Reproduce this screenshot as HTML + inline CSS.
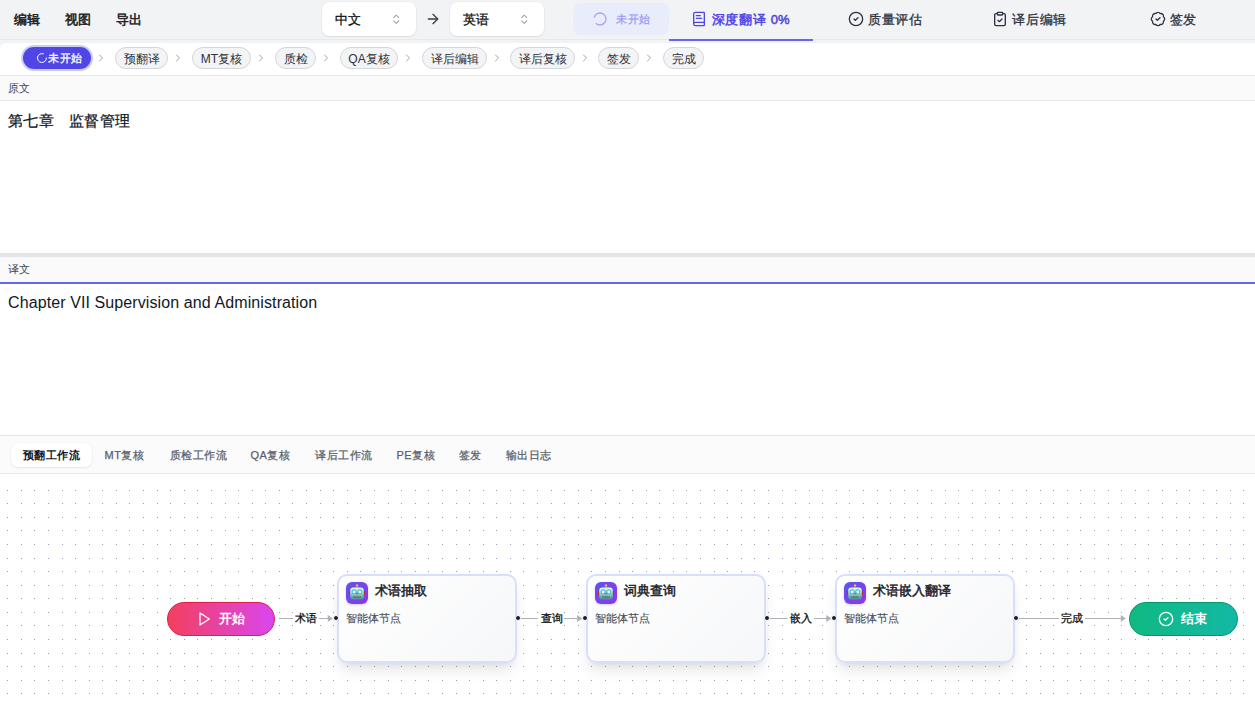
<!DOCTYPE html>
<html><head><meta charset="utf-8">
<style>
*{box-sizing:border-box;margin:0;padding:0}
html,body{width:1255px;height:706px;overflow:hidden;background:#fff;font-family:"Liberation Sans",sans-serif;color:#111827}
.abs{position:absolute}
.t{position:absolute;white-space:nowrap;line-height:1}
</style></head><body>
<div class="abs" style="left:0px;top:0px;width:1255px;height:50px;background:#f2f3f5"></div>
<div class="abs" style="left:0px;top:39px;width:1255px;height:1px;background:#e7e8eb"></div>
<div class="t" style="left:13.5px;top:12.5px;font-size:13px;color:#1f2328;-webkit-text-stroke-width:0.55px">编辑</div>
<div class="t" style="left:64.5px;top:12.5px;font-size:13px;color:#1f2328;-webkit-text-stroke-width:0.55px">视图</div>
<div class="t" style="left:115.5px;top:12.5px;font-size:13px;color:#1f2328;-webkit-text-stroke-width:0.55px">导出</div>
<div class="abs" style="left:322px;top:2px;width:94px;height:34px;background:#fff;border-radius:7px;box-shadow:0 0 0 0.5px rgba(0,0,0,0.05),0 1px 2px rgba(0,0,0,0.07)"></div>
<div class="t" style="left:334.5px;top:12.5px;font-size:13px;color:#111111;letter-spacing:0.5px;-webkit-text-stroke-width:0.3px">中文</div>
<svg class="abs" style="left:389.75px;top:12.5px;" width="12.5" height="12.5" fill="none" stroke-width="2" stroke-linecap="round" stroke-linejoin="round" viewBox="0 0 24 24" stroke="#9ca3af"><path d="m7 15 5 5 5-5"/><path d="m7 9 5-5 5 5"/></svg>
<div class="abs" style="left:450px;top:2px;width:94px;height:34px;background:#fff;border-radius:7px;box-shadow:0 0 0 0.5px rgba(0,0,0,0.05),0 1px 2px rgba(0,0,0,0.07)"></div>
<div class="t" style="left:462.5px;top:12.5px;font-size:13px;color:#111111;letter-spacing:0.5px;-webkit-text-stroke-width:0.3px">英语</div>
<svg class="abs" style="left:517.75px;top:12.5px;" width="12.5" height="12.5" fill="none" stroke-width="2" stroke-linecap="round" stroke-linejoin="round" viewBox="0 0 24 24" stroke="#9ca3af"><path d="m7 15 5 5 5-5"/><path d="m7 9 5-5 5 5"/></svg>
<svg class="abs" style="left:425px;top:11px;" width="16" height="16" fill="none" stroke-width="2" stroke-linecap="round" stroke-linejoin="round" viewBox="0 0 24 24" stroke="#3a3f47"><path d="M5 12h14"/><path d="m12 5 7 7-7 7"/></svg>
<div class="abs" style="left:573px;top:3px;width:96px;height:32px;background:#e9ecfa;border-radius:8px"></div>
<svg class="abs" style="left:592px;top:11px;transform:rotate(200deg)" width="16" height="16" fill="none" stroke-width="2" stroke-linecap="round" stroke-linejoin="round" viewBox="0 0 24 24" stroke="#a8a4f1"><path d="M21 12a9 9 0 1 1-6.219-8.56"/></svg>
<div class="t" style="left:616px;top:13.5px;font-size:11px;color:#a19ef0;letter-spacing:0.5px;-webkit-text-stroke-width:0.3px">未开始</div>
<div class="abs" style="left:669px;top:39px;width:144px;height:2px;background:#6366f1"></div>
<svg class="abs" style="left:691px;top:11px;" width="16" height="16" fill="none" stroke-width="2" stroke-linecap="round" stroke-linejoin="round" viewBox="0 0 24 24" stroke="#4f46e5"><path d="M4 19.5v-15A2.5 2.5 0 0 1 6.5 2H19a1 1 0 0 1 1 1v18a1 1 0 0 1-1 1H6.5a1 1 0 0 1 0-5H20"/><path d="M8 11h8"/><path d="M8 7h6"/></svg>
<div class="t" style="left:711.5px;top:12.5px;font-size:13px;color:#4f46e5;-webkit-text-stroke-width:0.5px"><span style="letter-spacing:0.9px">深度翻译</span> 0%</div>
<svg class="abs" style="left:848px;top:10.7px;" width="16" height="16" fill="none" stroke-width="2" stroke-linecap="round" stroke-linejoin="round" viewBox="0 0 24 24" stroke="#2b3340"><circle cx="12" cy="12" r="10"/><path d="m9 12 2 2 4-4"/></svg>
<div class="t" style="left:868px;top:12.5px;font-size:13px;color:#2b3340;letter-spacing:0.5px;-webkit-text-stroke-width:0.3px">质量评估</div>
<svg class="abs" style="left:992px;top:10.7px;" width="16" height="16" fill="none" stroke-width="2" stroke-linecap="round" stroke-linejoin="round" viewBox="0 0 24 24" stroke="#2b3340"><rect width="8" height="4" x="8" y="2" rx="1" ry="1"/><path d="M16 4h2a2 2 0 0 1 2 2v14a2 2 0 0 1-2 2H6a2 2 0 0 1-2-2V6a2 2 0 0 1 2-2h2"/><path d="m9 14 2 2 4-4"/></svg>
<div class="t" style="left:1012px;top:12.5px;font-size:13px;color:#2b3340;letter-spacing:0.8px;-webkit-text-stroke-width:0.3px">译后编辑</div>
<svg class="abs" style="left:1150px;top:10.7px;" width="16" height="16" fill="none" stroke-width="2" stroke-linecap="round" stroke-linejoin="round" viewBox="0 0 24 24" stroke="#2b3340"><path d="M3.85 8.62a4 4 0 0 1 4.78-4.77 4 4 0 0 1 6.74 0 4 4 0 0 1 4.78 4.78 4 4 0 0 1 0 6.74 4 4 0 0 1-4.77 4.78 4 4 0 0 1-6.75 0 4 4 0 0 1-4.78-4.77 4 4 0 0 1 0-6.76Z"/><path d="m9 12 2 2 4-4"/></svg>
<div class="t" style="left:1170px;top:12.5px;font-size:13px;color:#2b3340;letter-spacing:0.4px;-webkit-text-stroke-width:0.3px">签发</div>
<div class="abs" style="left:0px;top:43px;width:1255px;height:32px;background:#fff;border-top-left-radius:6px"></div>
<div class="abs" style="left:0px;top:75px;width:1255px;height:1px;background:#e5e7eb"></div>
<div class="abs" style="left:21px;top:45px;width:72px;height:26px;border-radius:13px;background:#c9cdfb"></div>
<div class="abs" style="left:23px;top:47px;width:68px;height:22px;border-radius:11px;background:#4f46e5"></div>
<svg class="abs" style="left:35.5px;top:52px;" width="12" height="12" fill="none" stroke-width="2" stroke-linecap="round" stroke-linejoin="round" viewBox="0 0 24 24" stroke="#ffffff"><path d="M21 12a9 9 0 1 1-6.219-8.56"/></svg>
<div class="t" style="left:48px;top:52.5px;font-size:11px;color:#ffffff;letter-spacing:0.5px;-webkit-text-stroke-width:0.3px">未开始</div>
<svg class="abs" style="left:95px;top:52px;" width="12" height="12" fill="none" stroke-width="2" stroke-linecap="round" stroke-linejoin="round" viewBox="0 0 24 24" stroke="#a3a3a3"><path d="m9 18 6-6-6-6"/></svg>
<svg class="abs" style="left:172px;top:52px;" width="12" height="12" fill="none" stroke-width="2" stroke-linecap="round" stroke-linejoin="round" viewBox="0 0 24 24" stroke="#a3a3a3"><path d="m9 18 6-6-6-6"/></svg>
<svg class="abs" style="left:255px;top:52px;" width="12" height="12" fill="none" stroke-width="2" stroke-linecap="round" stroke-linejoin="round" viewBox="0 0 24 24" stroke="#a3a3a3"><path d="m9 18 6-6-6-6"/></svg>
<svg class="abs" style="left:320px;top:52px;" width="12" height="12" fill="none" stroke-width="2" stroke-linecap="round" stroke-linejoin="round" viewBox="0 0 24 24" stroke="#a3a3a3"><path d="m9 18 6-6-6-6"/></svg>
<svg class="abs" style="left:402px;top:52px;" width="12" height="12" fill="none" stroke-width="2" stroke-linecap="round" stroke-linejoin="round" viewBox="0 0 24 24" stroke="#a3a3a3"><path d="m9 18 6-6-6-6"/></svg>
<svg class="abs" style="left:491px;top:52px;" width="12" height="12" fill="none" stroke-width="2" stroke-linecap="round" stroke-linejoin="round" viewBox="0 0 24 24" stroke="#a3a3a3"><path d="m9 18 6-6-6-6"/></svg>
<svg class="abs" style="left:579px;top:52px;" width="12" height="12" fill="none" stroke-width="2" stroke-linecap="round" stroke-linejoin="round" viewBox="0 0 24 24" stroke="#a3a3a3"><path d="m9 18 6-6-6-6"/></svg>
<svg class="abs" style="left:643px;top:52px;" width="12" height="12" fill="none" stroke-width="2" stroke-linecap="round" stroke-linejoin="round" viewBox="0 0 24 24" stroke="#a3a3a3"><path d="m9 18 6-6-6-6"/></svg>
<div class="abs" style="left:115px;top:47px;width:53px;height:22px;border:1px solid #d4d6db;background:#f3f4f6;border-radius:11px"></div>
<div class="t" style="left:115px;top:52.5px;font-size:12px;color:#2d3139;width:53px;text-align:center">预翻译</div>
<div class="abs" style="left:192px;top:47px;width:59px;height:22px;border:1px solid #d4d6db;background:#f3f4f6;border-radius:11px"></div>
<div class="t" style="left:192px;top:52.5px;font-size:12px;color:#2d3139;width:59px;text-align:center">MT复核</div>
<div class="abs" style="left:275px;top:47px;width:41px;height:22px;border:1px solid #d4d6db;background:#f3f4f6;border-radius:11px"></div>
<div class="t" style="left:275px;top:52.5px;font-size:12px;color:#2d3139;width:41px;text-align:center">质检</div>
<div class="abs" style="left:340px;top:47px;width:58px;height:22px;border:1px solid #d4d6db;background:#f3f4f6;border-radius:11px"></div>
<div class="t" style="left:340px;top:52.5px;font-size:12px;color:#2d3139;width:58px;text-align:center">QA复核</div>
<div class="abs" style="left:422px;top:47px;width:65px;height:22px;border:1px solid #d4d6db;background:#f3f4f6;border-radius:11px"></div>
<div class="t" style="left:422px;top:52.5px;font-size:12px;color:#2d3139;width:65px;text-align:center">译后编辑</div>
<div class="abs" style="left:510px;top:47px;width:65px;height:22px;border:1px solid #d4d6db;background:#f3f4f6;border-radius:11px"></div>
<div class="t" style="left:510px;top:52.5px;font-size:12px;color:#2d3139;width:65px;text-align:center">译后复核</div>
<div class="abs" style="left:598px;top:47px;width:41px;height:22px;border:1px solid #d4d6db;background:#f3f4f6;border-radius:11px"></div>
<div class="t" style="left:598px;top:52.5px;font-size:12px;color:#2d3139;width:41px;text-align:center">签发</div>
<div class="abs" style="left:663px;top:47px;width:41px;height:22px;border:1px solid #d4d6db;background:#f3f4f6;border-radius:11px"></div>
<div class="t" style="left:663px;top:52.5px;font-size:12px;color:#2d3139;width:41px;text-align:center">完成</div>
<div class="abs" style="left:0px;top:76px;width:1255px;height:24px;background:#f9faf9"></div>
<div class="abs" style="left:0px;top:100px;width:1255px;height:1px;background:#e5e7eb"></div>
<div class="t" style="left:8px;top:83px;font-size:11px;color:#3f4650">原文</div>
<div class="t" style="left:8px;top:113.3px;font-size:15px;color:#111827;letter-spacing:0.3px;-webkit-text-stroke-width:0.25px">第七章　监督管理</div>
<div class="abs" style="left:0px;top:253px;width:1255px;height:4px;background:#e4e5e9"></div>
<div class="abs" style="left:0px;top:257px;width:1255px;height:25px;background:#f9faf9"></div>
<div class="abs" style="left:0px;top:282px;width:1255px;height:2px;background:#6366f1"></div>
<div class="t" style="left:8px;top:264px;font-size:11px;color:#3f4650">译文</div>
<div class="t" style="left:8px;top:295px;font-size:16px;color:#111827;letter-spacing:0.1px">Chapter VII Supervision and Administration</div>
<div class="abs" style="left:0px;top:435px;width:1255px;height:1px;background:#e5e7eb"></div>
<div class="abs" style="left:0px;top:436px;width:1255px;height:37px;background:#fbfbfb"></div>
<div class="abs" style="left:0px;top:473px;width:1255px;height:1px;background:#e5e7eb"></div>
<div class="abs" style="left:11px;top:443px;width:81px;height:24px;background:#fff;border-radius:7px;box-shadow:0 1px 2px rgba(0,0,0,0.08),0 0 0 0.5px rgba(0,0,0,0.03)"></div>
<div class="t" style="left:22.5px;top:449.5px;font-size:11px;color:#111827;font-weight:700;letter-spacing:0.5px">预翻工作流</div>
<div class="t" style="left:104.5px;top:449.5px;font-size:11px;color:#5a606b;letter-spacing:0.5px;-webkit-text-stroke-width:0.25px">MT复核</div>
<div class="t" style="left:169.5px;top:449.5px;font-size:11px;color:#5a606b;letter-spacing:0.5px;-webkit-text-stroke-width:0.25px">质检工作流</div>
<div class="t" style="left:250.5px;top:449.5px;font-size:11px;color:#5a606b;letter-spacing:0.5px;-webkit-text-stroke-width:0.25px">QA复核</div>
<div class="t" style="left:315.0px;top:449.5px;font-size:11px;color:#5a606b;letter-spacing:0.5px;-webkit-text-stroke-width:0.25px">译后工作流</div>
<div class="t" style="left:396.5px;top:449.5px;font-size:11px;color:#5a606b;letter-spacing:0.5px;-webkit-text-stroke-width:0.25px">PE复核</div>
<div class="t" style="left:458.5px;top:449.5px;font-size:11px;color:#5a606b;letter-spacing:0.5px;-webkit-text-stroke-width:0.25px">签发</div>
<div class="t" style="left:505.5px;top:449.5px;font-size:11px;color:#5a606b;letter-spacing:0.5px;-webkit-text-stroke-width:0.25px">输出日志</div>
<svg class="abs" style="left:0;top:0" width="1255" height="706" shape-rendering="crispEdges"><path d="M7 490h1v1h-1zM21 490h1v1h-1zM34 490h1v1h-1zM48 490h1v1h-1zM62 490h1v1h-1zM75 490h1v1h-1zM89 490h1v1h-1zM102 490h1v1h-1zM116 490h1v1h-1zM129 490h1v1h-1zM143 490h1v1h-1zM157 490h1v1h-1zM170 490h1v1h-1zM184 490h1v1h-1zM197 490h1v1h-1zM211 490h1v1h-1zM225 490h1v1h-1zM238 490h1v1h-1zM252 490h1v1h-1zM265 490h1v1h-1zM279 490h1v1h-1zM292 490h1v1h-1zM306 490h1v1h-1zM320 490h1v1h-1zM333 490h1v1h-1zM347 490h1v1h-1zM360 490h1v1h-1zM374 490h1v1h-1zM388 490h1v1h-1zM401 490h1v1h-1zM415 490h1v1h-1zM428 490h1v1h-1zM442 490h1v1h-1zM456 490h1v1h-1zM469 490h1v1h-1zM483 490h1v1h-1zM496 490h1v1h-1zM510 490h1v1h-1zM523 490h1v1h-1zM537 490h1v1h-1zM551 490h1v1h-1zM564 490h1v1h-1zM578 490h1v1h-1zM591 490h1v1h-1zM605 490h1v1h-1zM619 490h1v1h-1zM632 490h1v1h-1zM646 490h1v1h-1zM659 490h1v1h-1zM673 490h1v1h-1zM686 490h1v1h-1zM700 490h1v1h-1zM714 490h1v1h-1zM727 490h1v1h-1zM741 490h1v1h-1zM754 490h1v1h-1zM768 490h1v1h-1zM782 490h1v1h-1zM795 490h1v1h-1zM809 490h1v1h-1zM822 490h1v1h-1zM836 490h1v1h-1zM849 490h1v1h-1zM863 490h1v1h-1zM877 490h1v1h-1zM890 490h1v1h-1zM904 490h1v1h-1zM917 490h1v1h-1zM931 490h1v1h-1zM945 490h1v1h-1zM958 490h1v1h-1zM972 490h1v1h-1zM985 490h1v1h-1zM999 490h1v1h-1zM1012 490h1v1h-1zM1026 490h1v1h-1zM1040 490h1v1h-1zM1053 490h1v1h-1zM1067 490h1v1h-1zM1080 490h1v1h-1zM1094 490h1v1h-1zM1108 490h1v1h-1zM1121 490h1v1h-1zM1135 490h1v1h-1zM1148 490h1v1h-1zM1162 490h1v1h-1zM1176 490h1v1h-1zM1189 490h1v1h-1zM1203 490h1v1h-1zM1216 490h1v1h-1zM1230 490h1v1h-1zM1243 490h1v1h-1zM7 503h1v1h-1zM21 503h1v1h-1zM34 503h1v1h-1zM48 503h1v1h-1zM62 503h1v1h-1zM75 503h1v1h-1zM89 503h1v1h-1zM102 503h1v1h-1zM116 503h1v1h-1zM129 503h1v1h-1zM143 503h1v1h-1zM157 503h1v1h-1zM170 503h1v1h-1zM184 503h1v1h-1zM197 503h1v1h-1zM211 503h1v1h-1zM225 503h1v1h-1zM238 503h1v1h-1zM252 503h1v1h-1zM265 503h1v1h-1zM279 503h1v1h-1zM292 503h1v1h-1zM306 503h1v1h-1zM320 503h1v1h-1zM333 503h1v1h-1zM347 503h1v1h-1zM360 503h1v1h-1zM374 503h1v1h-1zM388 503h1v1h-1zM401 503h1v1h-1zM415 503h1v1h-1zM428 503h1v1h-1zM442 503h1v1h-1zM456 503h1v1h-1zM469 503h1v1h-1zM483 503h1v1h-1zM496 503h1v1h-1zM510 503h1v1h-1zM523 503h1v1h-1zM537 503h1v1h-1zM551 503h1v1h-1zM564 503h1v1h-1zM578 503h1v1h-1zM591 503h1v1h-1zM605 503h1v1h-1zM619 503h1v1h-1zM632 503h1v1h-1zM646 503h1v1h-1zM659 503h1v1h-1zM673 503h1v1h-1zM686 503h1v1h-1zM700 503h1v1h-1zM714 503h1v1h-1zM727 503h1v1h-1zM741 503h1v1h-1zM754 503h1v1h-1zM768 503h1v1h-1zM782 503h1v1h-1zM795 503h1v1h-1zM809 503h1v1h-1zM822 503h1v1h-1zM836 503h1v1h-1zM849 503h1v1h-1zM863 503h1v1h-1zM877 503h1v1h-1zM890 503h1v1h-1zM904 503h1v1h-1zM917 503h1v1h-1zM931 503h1v1h-1zM945 503h1v1h-1zM958 503h1v1h-1zM972 503h1v1h-1zM985 503h1v1h-1zM999 503h1v1h-1zM1012 503h1v1h-1zM1026 503h1v1h-1zM1040 503h1v1h-1zM1053 503h1v1h-1zM1067 503h1v1h-1zM1080 503h1v1h-1zM1094 503h1v1h-1zM1108 503h1v1h-1zM1121 503h1v1h-1zM1135 503h1v1h-1zM1148 503h1v1h-1zM1162 503h1v1h-1zM1176 503h1v1h-1zM1189 503h1v1h-1zM1203 503h1v1h-1zM1216 503h1v1h-1zM1230 503h1v1h-1zM1243 503h1v1h-1zM7 517h1v1h-1zM21 517h1v1h-1zM34 517h1v1h-1zM48 517h1v1h-1zM62 517h1v1h-1zM75 517h1v1h-1zM89 517h1v1h-1zM102 517h1v1h-1zM116 517h1v1h-1zM129 517h1v1h-1zM143 517h1v1h-1zM157 517h1v1h-1zM170 517h1v1h-1zM184 517h1v1h-1zM197 517h1v1h-1zM211 517h1v1h-1zM225 517h1v1h-1zM238 517h1v1h-1zM252 517h1v1h-1zM265 517h1v1h-1zM279 517h1v1h-1zM292 517h1v1h-1zM306 517h1v1h-1zM320 517h1v1h-1zM333 517h1v1h-1zM347 517h1v1h-1zM360 517h1v1h-1zM374 517h1v1h-1zM388 517h1v1h-1zM401 517h1v1h-1zM415 517h1v1h-1zM428 517h1v1h-1zM442 517h1v1h-1zM456 517h1v1h-1zM469 517h1v1h-1zM483 517h1v1h-1zM496 517h1v1h-1zM510 517h1v1h-1zM523 517h1v1h-1zM537 517h1v1h-1zM551 517h1v1h-1zM564 517h1v1h-1zM578 517h1v1h-1zM591 517h1v1h-1zM605 517h1v1h-1zM619 517h1v1h-1zM632 517h1v1h-1zM646 517h1v1h-1zM659 517h1v1h-1zM673 517h1v1h-1zM686 517h1v1h-1zM700 517h1v1h-1zM714 517h1v1h-1zM727 517h1v1h-1zM741 517h1v1h-1zM754 517h1v1h-1zM768 517h1v1h-1zM782 517h1v1h-1zM795 517h1v1h-1zM809 517h1v1h-1zM822 517h1v1h-1zM836 517h1v1h-1zM849 517h1v1h-1zM863 517h1v1h-1zM877 517h1v1h-1zM890 517h1v1h-1zM904 517h1v1h-1zM917 517h1v1h-1zM931 517h1v1h-1zM945 517h1v1h-1zM958 517h1v1h-1zM972 517h1v1h-1zM985 517h1v1h-1zM999 517h1v1h-1zM1012 517h1v1h-1zM1026 517h1v1h-1zM1040 517h1v1h-1zM1053 517h1v1h-1zM1067 517h1v1h-1zM1080 517h1v1h-1zM1094 517h1v1h-1zM1108 517h1v1h-1zM1121 517h1v1h-1zM1135 517h1v1h-1zM1148 517h1v1h-1zM1162 517h1v1h-1zM1176 517h1v1h-1zM1189 517h1v1h-1zM1203 517h1v1h-1zM1216 517h1v1h-1zM1230 517h1v1h-1zM1243 517h1v1h-1zM7 530h1v1h-1zM21 530h1v1h-1zM34 530h1v1h-1zM48 530h1v1h-1zM62 530h1v1h-1zM75 530h1v1h-1zM89 530h1v1h-1zM102 530h1v1h-1zM116 530h1v1h-1zM129 530h1v1h-1zM143 530h1v1h-1zM157 530h1v1h-1zM170 530h1v1h-1zM184 530h1v1h-1zM197 530h1v1h-1zM211 530h1v1h-1zM225 530h1v1h-1zM238 530h1v1h-1zM252 530h1v1h-1zM265 530h1v1h-1zM279 530h1v1h-1zM292 530h1v1h-1zM306 530h1v1h-1zM320 530h1v1h-1zM333 530h1v1h-1zM347 530h1v1h-1zM360 530h1v1h-1zM374 530h1v1h-1zM388 530h1v1h-1zM401 530h1v1h-1zM415 530h1v1h-1zM428 530h1v1h-1zM442 530h1v1h-1zM456 530h1v1h-1zM469 530h1v1h-1zM483 530h1v1h-1zM496 530h1v1h-1zM510 530h1v1h-1zM523 530h1v1h-1zM537 530h1v1h-1zM551 530h1v1h-1zM564 530h1v1h-1zM578 530h1v1h-1zM591 530h1v1h-1zM605 530h1v1h-1zM619 530h1v1h-1zM632 530h1v1h-1zM646 530h1v1h-1zM659 530h1v1h-1zM673 530h1v1h-1zM686 530h1v1h-1zM700 530h1v1h-1zM714 530h1v1h-1zM727 530h1v1h-1zM741 530h1v1h-1zM754 530h1v1h-1zM768 530h1v1h-1zM782 530h1v1h-1zM795 530h1v1h-1zM809 530h1v1h-1zM822 530h1v1h-1zM836 530h1v1h-1zM849 530h1v1h-1zM863 530h1v1h-1zM877 530h1v1h-1zM890 530h1v1h-1zM904 530h1v1h-1zM917 530h1v1h-1zM931 530h1v1h-1zM945 530h1v1h-1zM958 530h1v1h-1zM972 530h1v1h-1zM985 530h1v1h-1zM999 530h1v1h-1zM1012 530h1v1h-1zM1026 530h1v1h-1zM1040 530h1v1h-1zM1053 530h1v1h-1zM1067 530h1v1h-1zM1080 530h1v1h-1zM1094 530h1v1h-1zM1108 530h1v1h-1zM1121 530h1v1h-1zM1135 530h1v1h-1zM1148 530h1v1h-1zM1162 530h1v1h-1zM1176 530h1v1h-1zM1189 530h1v1h-1zM1203 530h1v1h-1zM1216 530h1v1h-1zM1230 530h1v1h-1zM1243 530h1v1h-1zM7 544h1v1h-1zM21 544h1v1h-1zM34 544h1v1h-1zM48 544h1v1h-1zM62 544h1v1h-1zM75 544h1v1h-1zM89 544h1v1h-1zM102 544h1v1h-1zM116 544h1v1h-1zM129 544h1v1h-1zM143 544h1v1h-1zM157 544h1v1h-1zM170 544h1v1h-1zM184 544h1v1h-1zM197 544h1v1h-1zM211 544h1v1h-1zM225 544h1v1h-1zM238 544h1v1h-1zM252 544h1v1h-1zM265 544h1v1h-1zM279 544h1v1h-1zM292 544h1v1h-1zM306 544h1v1h-1zM320 544h1v1h-1zM333 544h1v1h-1zM347 544h1v1h-1zM360 544h1v1h-1zM374 544h1v1h-1zM388 544h1v1h-1zM401 544h1v1h-1zM415 544h1v1h-1zM428 544h1v1h-1zM442 544h1v1h-1zM456 544h1v1h-1zM469 544h1v1h-1zM483 544h1v1h-1zM496 544h1v1h-1zM510 544h1v1h-1zM523 544h1v1h-1zM537 544h1v1h-1zM551 544h1v1h-1zM564 544h1v1h-1zM578 544h1v1h-1zM591 544h1v1h-1zM605 544h1v1h-1zM619 544h1v1h-1zM632 544h1v1h-1zM646 544h1v1h-1zM659 544h1v1h-1zM673 544h1v1h-1zM686 544h1v1h-1zM700 544h1v1h-1zM714 544h1v1h-1zM727 544h1v1h-1zM741 544h1v1h-1zM754 544h1v1h-1zM768 544h1v1h-1zM782 544h1v1h-1zM795 544h1v1h-1zM809 544h1v1h-1zM822 544h1v1h-1zM836 544h1v1h-1zM849 544h1v1h-1zM863 544h1v1h-1zM877 544h1v1h-1zM890 544h1v1h-1zM904 544h1v1h-1zM917 544h1v1h-1zM931 544h1v1h-1zM945 544h1v1h-1zM958 544h1v1h-1zM972 544h1v1h-1zM985 544h1v1h-1zM999 544h1v1h-1zM1012 544h1v1h-1zM1026 544h1v1h-1zM1040 544h1v1h-1zM1053 544h1v1h-1zM1067 544h1v1h-1zM1080 544h1v1h-1zM1094 544h1v1h-1zM1108 544h1v1h-1zM1121 544h1v1h-1zM1135 544h1v1h-1zM1148 544h1v1h-1zM1162 544h1v1h-1zM1176 544h1v1h-1zM1189 544h1v1h-1zM1203 544h1v1h-1zM1216 544h1v1h-1zM1230 544h1v1h-1zM1243 544h1v1h-1zM7 558h1v1h-1zM21 558h1v1h-1zM34 558h1v1h-1zM48 558h1v1h-1zM62 558h1v1h-1zM75 558h1v1h-1zM89 558h1v1h-1zM102 558h1v1h-1zM116 558h1v1h-1zM129 558h1v1h-1zM143 558h1v1h-1zM157 558h1v1h-1zM170 558h1v1h-1zM184 558h1v1h-1zM197 558h1v1h-1zM211 558h1v1h-1zM225 558h1v1h-1zM238 558h1v1h-1zM252 558h1v1h-1zM265 558h1v1h-1zM279 558h1v1h-1zM292 558h1v1h-1zM306 558h1v1h-1zM320 558h1v1h-1zM333 558h1v1h-1zM347 558h1v1h-1zM360 558h1v1h-1zM374 558h1v1h-1zM388 558h1v1h-1zM401 558h1v1h-1zM415 558h1v1h-1zM428 558h1v1h-1zM442 558h1v1h-1zM456 558h1v1h-1zM469 558h1v1h-1zM483 558h1v1h-1zM496 558h1v1h-1zM510 558h1v1h-1zM523 558h1v1h-1zM537 558h1v1h-1zM551 558h1v1h-1zM564 558h1v1h-1zM578 558h1v1h-1zM591 558h1v1h-1zM605 558h1v1h-1zM619 558h1v1h-1zM632 558h1v1h-1zM646 558h1v1h-1zM659 558h1v1h-1zM673 558h1v1h-1zM686 558h1v1h-1zM700 558h1v1h-1zM714 558h1v1h-1zM727 558h1v1h-1zM741 558h1v1h-1zM754 558h1v1h-1zM768 558h1v1h-1zM782 558h1v1h-1zM795 558h1v1h-1zM809 558h1v1h-1zM822 558h1v1h-1zM836 558h1v1h-1zM849 558h1v1h-1zM863 558h1v1h-1zM877 558h1v1h-1zM890 558h1v1h-1zM904 558h1v1h-1zM917 558h1v1h-1zM931 558h1v1h-1zM945 558h1v1h-1zM958 558h1v1h-1zM972 558h1v1h-1zM985 558h1v1h-1zM999 558h1v1h-1zM1012 558h1v1h-1zM1026 558h1v1h-1zM1040 558h1v1h-1zM1053 558h1v1h-1zM1067 558h1v1h-1zM1080 558h1v1h-1zM1094 558h1v1h-1zM1108 558h1v1h-1zM1121 558h1v1h-1zM1135 558h1v1h-1zM1148 558h1v1h-1zM1162 558h1v1h-1zM1176 558h1v1h-1zM1189 558h1v1h-1zM1203 558h1v1h-1zM1216 558h1v1h-1zM1230 558h1v1h-1zM1243 558h1v1h-1zM7 571h1v1h-1zM21 571h1v1h-1zM34 571h1v1h-1zM48 571h1v1h-1zM62 571h1v1h-1zM75 571h1v1h-1zM89 571h1v1h-1zM102 571h1v1h-1zM116 571h1v1h-1zM129 571h1v1h-1zM143 571h1v1h-1zM157 571h1v1h-1zM170 571h1v1h-1zM184 571h1v1h-1zM197 571h1v1h-1zM211 571h1v1h-1zM225 571h1v1h-1zM238 571h1v1h-1zM252 571h1v1h-1zM265 571h1v1h-1zM279 571h1v1h-1zM292 571h1v1h-1zM306 571h1v1h-1zM320 571h1v1h-1zM333 571h1v1h-1zM347 571h1v1h-1zM360 571h1v1h-1zM374 571h1v1h-1zM388 571h1v1h-1zM401 571h1v1h-1zM415 571h1v1h-1zM428 571h1v1h-1zM442 571h1v1h-1zM456 571h1v1h-1zM469 571h1v1h-1zM483 571h1v1h-1zM496 571h1v1h-1zM510 571h1v1h-1zM523 571h1v1h-1zM537 571h1v1h-1zM551 571h1v1h-1zM564 571h1v1h-1zM578 571h1v1h-1zM591 571h1v1h-1zM605 571h1v1h-1zM619 571h1v1h-1zM632 571h1v1h-1zM646 571h1v1h-1zM659 571h1v1h-1zM673 571h1v1h-1zM686 571h1v1h-1zM700 571h1v1h-1zM714 571h1v1h-1zM727 571h1v1h-1zM741 571h1v1h-1zM754 571h1v1h-1zM768 571h1v1h-1zM782 571h1v1h-1zM795 571h1v1h-1zM809 571h1v1h-1zM822 571h1v1h-1zM836 571h1v1h-1zM849 571h1v1h-1zM863 571h1v1h-1zM877 571h1v1h-1zM890 571h1v1h-1zM904 571h1v1h-1zM917 571h1v1h-1zM931 571h1v1h-1zM945 571h1v1h-1zM958 571h1v1h-1zM972 571h1v1h-1zM985 571h1v1h-1zM999 571h1v1h-1zM1012 571h1v1h-1zM1026 571h1v1h-1zM1040 571h1v1h-1zM1053 571h1v1h-1zM1067 571h1v1h-1zM1080 571h1v1h-1zM1094 571h1v1h-1zM1108 571h1v1h-1zM1121 571h1v1h-1zM1135 571h1v1h-1zM1148 571h1v1h-1zM1162 571h1v1h-1zM1176 571h1v1h-1zM1189 571h1v1h-1zM1203 571h1v1h-1zM1216 571h1v1h-1zM1230 571h1v1h-1zM1243 571h1v1h-1zM7 585h1v1h-1zM21 585h1v1h-1zM34 585h1v1h-1zM48 585h1v1h-1zM62 585h1v1h-1zM75 585h1v1h-1zM89 585h1v1h-1zM102 585h1v1h-1zM116 585h1v1h-1zM129 585h1v1h-1zM143 585h1v1h-1zM157 585h1v1h-1zM170 585h1v1h-1zM184 585h1v1h-1zM197 585h1v1h-1zM211 585h1v1h-1zM225 585h1v1h-1zM238 585h1v1h-1zM252 585h1v1h-1zM265 585h1v1h-1zM279 585h1v1h-1zM292 585h1v1h-1zM306 585h1v1h-1zM320 585h1v1h-1zM333 585h1v1h-1zM347 585h1v1h-1zM360 585h1v1h-1zM374 585h1v1h-1zM388 585h1v1h-1zM401 585h1v1h-1zM415 585h1v1h-1zM428 585h1v1h-1zM442 585h1v1h-1zM456 585h1v1h-1zM469 585h1v1h-1zM483 585h1v1h-1zM496 585h1v1h-1zM510 585h1v1h-1zM523 585h1v1h-1zM537 585h1v1h-1zM551 585h1v1h-1zM564 585h1v1h-1zM578 585h1v1h-1zM591 585h1v1h-1zM605 585h1v1h-1zM619 585h1v1h-1zM632 585h1v1h-1zM646 585h1v1h-1zM659 585h1v1h-1zM673 585h1v1h-1zM686 585h1v1h-1zM700 585h1v1h-1zM714 585h1v1h-1zM727 585h1v1h-1zM741 585h1v1h-1zM754 585h1v1h-1zM768 585h1v1h-1zM782 585h1v1h-1zM795 585h1v1h-1zM809 585h1v1h-1zM822 585h1v1h-1zM836 585h1v1h-1zM849 585h1v1h-1zM863 585h1v1h-1zM877 585h1v1h-1zM890 585h1v1h-1zM904 585h1v1h-1zM917 585h1v1h-1zM931 585h1v1h-1zM945 585h1v1h-1zM958 585h1v1h-1zM972 585h1v1h-1zM985 585h1v1h-1zM999 585h1v1h-1zM1012 585h1v1h-1zM1026 585h1v1h-1zM1040 585h1v1h-1zM1053 585h1v1h-1zM1067 585h1v1h-1zM1080 585h1v1h-1zM1094 585h1v1h-1zM1108 585h1v1h-1zM1121 585h1v1h-1zM1135 585h1v1h-1zM1148 585h1v1h-1zM1162 585h1v1h-1zM1176 585h1v1h-1zM1189 585h1v1h-1zM1203 585h1v1h-1zM1216 585h1v1h-1zM1230 585h1v1h-1zM1243 585h1v1h-1zM7 598h1v1h-1zM21 598h1v1h-1zM34 598h1v1h-1zM48 598h1v1h-1zM62 598h1v1h-1zM75 598h1v1h-1zM89 598h1v1h-1zM102 598h1v1h-1zM116 598h1v1h-1zM129 598h1v1h-1zM143 598h1v1h-1zM157 598h1v1h-1zM170 598h1v1h-1zM184 598h1v1h-1zM197 598h1v1h-1zM211 598h1v1h-1zM225 598h1v1h-1zM238 598h1v1h-1zM252 598h1v1h-1zM265 598h1v1h-1zM279 598h1v1h-1zM292 598h1v1h-1zM306 598h1v1h-1zM320 598h1v1h-1zM333 598h1v1h-1zM347 598h1v1h-1zM360 598h1v1h-1zM374 598h1v1h-1zM388 598h1v1h-1zM401 598h1v1h-1zM415 598h1v1h-1zM428 598h1v1h-1zM442 598h1v1h-1zM456 598h1v1h-1zM469 598h1v1h-1zM483 598h1v1h-1zM496 598h1v1h-1zM510 598h1v1h-1zM523 598h1v1h-1zM537 598h1v1h-1zM551 598h1v1h-1zM564 598h1v1h-1zM578 598h1v1h-1zM591 598h1v1h-1zM605 598h1v1h-1zM619 598h1v1h-1zM632 598h1v1h-1zM646 598h1v1h-1zM659 598h1v1h-1zM673 598h1v1h-1zM686 598h1v1h-1zM700 598h1v1h-1zM714 598h1v1h-1zM727 598h1v1h-1zM741 598h1v1h-1zM754 598h1v1h-1zM768 598h1v1h-1zM782 598h1v1h-1zM795 598h1v1h-1zM809 598h1v1h-1zM822 598h1v1h-1zM836 598h1v1h-1zM849 598h1v1h-1zM863 598h1v1h-1zM877 598h1v1h-1zM890 598h1v1h-1zM904 598h1v1h-1zM917 598h1v1h-1zM931 598h1v1h-1zM945 598h1v1h-1zM958 598h1v1h-1zM972 598h1v1h-1zM985 598h1v1h-1zM999 598h1v1h-1zM1012 598h1v1h-1zM1026 598h1v1h-1zM1040 598h1v1h-1zM1053 598h1v1h-1zM1067 598h1v1h-1zM1080 598h1v1h-1zM1094 598h1v1h-1zM1108 598h1v1h-1zM1121 598h1v1h-1zM1135 598h1v1h-1zM1148 598h1v1h-1zM1162 598h1v1h-1zM1176 598h1v1h-1zM1189 598h1v1h-1zM1203 598h1v1h-1zM1216 598h1v1h-1zM1230 598h1v1h-1zM1243 598h1v1h-1zM7 612h1v1h-1zM21 612h1v1h-1zM34 612h1v1h-1zM48 612h1v1h-1zM62 612h1v1h-1zM75 612h1v1h-1zM89 612h1v1h-1zM102 612h1v1h-1zM116 612h1v1h-1zM129 612h1v1h-1zM143 612h1v1h-1zM157 612h1v1h-1zM170 612h1v1h-1zM184 612h1v1h-1zM197 612h1v1h-1zM211 612h1v1h-1zM225 612h1v1h-1zM238 612h1v1h-1zM252 612h1v1h-1zM265 612h1v1h-1zM279 612h1v1h-1zM292 612h1v1h-1zM306 612h1v1h-1zM320 612h1v1h-1zM333 612h1v1h-1zM347 612h1v1h-1zM360 612h1v1h-1zM374 612h1v1h-1zM388 612h1v1h-1zM401 612h1v1h-1zM415 612h1v1h-1zM428 612h1v1h-1zM442 612h1v1h-1zM456 612h1v1h-1zM469 612h1v1h-1zM483 612h1v1h-1zM496 612h1v1h-1zM510 612h1v1h-1zM523 612h1v1h-1zM537 612h1v1h-1zM551 612h1v1h-1zM564 612h1v1h-1zM578 612h1v1h-1zM591 612h1v1h-1zM605 612h1v1h-1zM619 612h1v1h-1zM632 612h1v1h-1zM646 612h1v1h-1zM659 612h1v1h-1zM673 612h1v1h-1zM686 612h1v1h-1zM700 612h1v1h-1zM714 612h1v1h-1zM727 612h1v1h-1zM741 612h1v1h-1zM754 612h1v1h-1zM768 612h1v1h-1zM782 612h1v1h-1zM795 612h1v1h-1zM809 612h1v1h-1zM822 612h1v1h-1zM836 612h1v1h-1zM849 612h1v1h-1zM863 612h1v1h-1zM877 612h1v1h-1zM890 612h1v1h-1zM904 612h1v1h-1zM917 612h1v1h-1zM931 612h1v1h-1zM945 612h1v1h-1zM958 612h1v1h-1zM972 612h1v1h-1zM985 612h1v1h-1zM999 612h1v1h-1zM1012 612h1v1h-1zM1026 612h1v1h-1zM1040 612h1v1h-1zM1053 612h1v1h-1zM1067 612h1v1h-1zM1080 612h1v1h-1zM1094 612h1v1h-1zM1108 612h1v1h-1zM1121 612h1v1h-1zM1135 612h1v1h-1zM1148 612h1v1h-1zM1162 612h1v1h-1zM1176 612h1v1h-1zM1189 612h1v1h-1zM1203 612h1v1h-1zM1216 612h1v1h-1zM1230 612h1v1h-1zM1243 612h1v1h-1zM7 625h1v1h-1zM21 625h1v1h-1zM34 625h1v1h-1zM48 625h1v1h-1zM62 625h1v1h-1zM75 625h1v1h-1zM89 625h1v1h-1zM102 625h1v1h-1zM116 625h1v1h-1zM129 625h1v1h-1zM143 625h1v1h-1zM157 625h1v1h-1zM170 625h1v1h-1zM184 625h1v1h-1zM197 625h1v1h-1zM211 625h1v1h-1zM225 625h1v1h-1zM238 625h1v1h-1zM252 625h1v1h-1zM265 625h1v1h-1zM279 625h1v1h-1zM292 625h1v1h-1zM306 625h1v1h-1zM320 625h1v1h-1zM333 625h1v1h-1zM347 625h1v1h-1zM360 625h1v1h-1zM374 625h1v1h-1zM388 625h1v1h-1zM401 625h1v1h-1zM415 625h1v1h-1zM428 625h1v1h-1zM442 625h1v1h-1zM456 625h1v1h-1zM469 625h1v1h-1zM483 625h1v1h-1zM496 625h1v1h-1zM510 625h1v1h-1zM523 625h1v1h-1zM537 625h1v1h-1zM551 625h1v1h-1zM564 625h1v1h-1zM578 625h1v1h-1zM591 625h1v1h-1zM605 625h1v1h-1zM619 625h1v1h-1zM632 625h1v1h-1zM646 625h1v1h-1zM659 625h1v1h-1zM673 625h1v1h-1zM686 625h1v1h-1zM700 625h1v1h-1zM714 625h1v1h-1zM727 625h1v1h-1zM741 625h1v1h-1zM754 625h1v1h-1zM768 625h1v1h-1zM782 625h1v1h-1zM795 625h1v1h-1zM809 625h1v1h-1zM822 625h1v1h-1zM836 625h1v1h-1zM849 625h1v1h-1zM863 625h1v1h-1zM877 625h1v1h-1zM890 625h1v1h-1zM904 625h1v1h-1zM917 625h1v1h-1zM931 625h1v1h-1zM945 625h1v1h-1zM958 625h1v1h-1zM972 625h1v1h-1zM985 625h1v1h-1zM999 625h1v1h-1zM1012 625h1v1h-1zM1026 625h1v1h-1zM1040 625h1v1h-1zM1053 625h1v1h-1zM1067 625h1v1h-1zM1080 625h1v1h-1zM1094 625h1v1h-1zM1108 625h1v1h-1zM1121 625h1v1h-1zM1135 625h1v1h-1zM1148 625h1v1h-1zM1162 625h1v1h-1zM1176 625h1v1h-1zM1189 625h1v1h-1zM1203 625h1v1h-1zM1216 625h1v1h-1zM1230 625h1v1h-1zM1243 625h1v1h-1zM7 639h1v1h-1zM21 639h1v1h-1zM34 639h1v1h-1zM48 639h1v1h-1zM62 639h1v1h-1zM75 639h1v1h-1zM89 639h1v1h-1zM102 639h1v1h-1zM116 639h1v1h-1zM129 639h1v1h-1zM143 639h1v1h-1zM157 639h1v1h-1zM170 639h1v1h-1zM184 639h1v1h-1zM197 639h1v1h-1zM211 639h1v1h-1zM225 639h1v1h-1zM238 639h1v1h-1zM252 639h1v1h-1zM265 639h1v1h-1zM279 639h1v1h-1zM292 639h1v1h-1zM306 639h1v1h-1zM320 639h1v1h-1zM333 639h1v1h-1zM347 639h1v1h-1zM360 639h1v1h-1zM374 639h1v1h-1zM388 639h1v1h-1zM401 639h1v1h-1zM415 639h1v1h-1zM428 639h1v1h-1zM442 639h1v1h-1zM456 639h1v1h-1zM469 639h1v1h-1zM483 639h1v1h-1zM496 639h1v1h-1zM510 639h1v1h-1zM523 639h1v1h-1zM537 639h1v1h-1zM551 639h1v1h-1zM564 639h1v1h-1zM578 639h1v1h-1zM591 639h1v1h-1zM605 639h1v1h-1zM619 639h1v1h-1zM632 639h1v1h-1zM646 639h1v1h-1zM659 639h1v1h-1zM673 639h1v1h-1zM686 639h1v1h-1zM700 639h1v1h-1zM714 639h1v1h-1zM727 639h1v1h-1zM741 639h1v1h-1zM754 639h1v1h-1zM768 639h1v1h-1zM782 639h1v1h-1zM795 639h1v1h-1zM809 639h1v1h-1zM822 639h1v1h-1zM836 639h1v1h-1zM849 639h1v1h-1zM863 639h1v1h-1zM877 639h1v1h-1zM890 639h1v1h-1zM904 639h1v1h-1zM917 639h1v1h-1zM931 639h1v1h-1zM945 639h1v1h-1zM958 639h1v1h-1zM972 639h1v1h-1zM985 639h1v1h-1zM999 639h1v1h-1zM1012 639h1v1h-1zM1026 639h1v1h-1zM1040 639h1v1h-1zM1053 639h1v1h-1zM1067 639h1v1h-1zM1080 639h1v1h-1zM1094 639h1v1h-1zM1108 639h1v1h-1zM1121 639h1v1h-1zM1135 639h1v1h-1zM1148 639h1v1h-1zM1162 639h1v1h-1zM1176 639h1v1h-1zM1189 639h1v1h-1zM1203 639h1v1h-1zM1216 639h1v1h-1zM1230 639h1v1h-1zM1243 639h1v1h-1zM7 653h1v1h-1zM21 653h1v1h-1zM34 653h1v1h-1zM48 653h1v1h-1zM62 653h1v1h-1zM75 653h1v1h-1zM89 653h1v1h-1zM102 653h1v1h-1zM116 653h1v1h-1zM129 653h1v1h-1zM143 653h1v1h-1zM157 653h1v1h-1zM170 653h1v1h-1zM184 653h1v1h-1zM197 653h1v1h-1zM211 653h1v1h-1zM225 653h1v1h-1zM238 653h1v1h-1zM252 653h1v1h-1zM265 653h1v1h-1zM279 653h1v1h-1zM292 653h1v1h-1zM306 653h1v1h-1zM320 653h1v1h-1zM333 653h1v1h-1zM347 653h1v1h-1zM360 653h1v1h-1zM374 653h1v1h-1zM388 653h1v1h-1zM401 653h1v1h-1zM415 653h1v1h-1zM428 653h1v1h-1zM442 653h1v1h-1zM456 653h1v1h-1zM469 653h1v1h-1zM483 653h1v1h-1zM496 653h1v1h-1zM510 653h1v1h-1zM523 653h1v1h-1zM537 653h1v1h-1zM551 653h1v1h-1zM564 653h1v1h-1zM578 653h1v1h-1zM591 653h1v1h-1zM605 653h1v1h-1zM619 653h1v1h-1zM632 653h1v1h-1zM646 653h1v1h-1zM659 653h1v1h-1zM673 653h1v1h-1zM686 653h1v1h-1zM700 653h1v1h-1zM714 653h1v1h-1zM727 653h1v1h-1zM741 653h1v1h-1zM754 653h1v1h-1zM768 653h1v1h-1zM782 653h1v1h-1zM795 653h1v1h-1zM809 653h1v1h-1zM822 653h1v1h-1zM836 653h1v1h-1zM849 653h1v1h-1zM863 653h1v1h-1zM877 653h1v1h-1zM890 653h1v1h-1zM904 653h1v1h-1zM917 653h1v1h-1zM931 653h1v1h-1zM945 653h1v1h-1zM958 653h1v1h-1zM972 653h1v1h-1zM985 653h1v1h-1zM999 653h1v1h-1zM1012 653h1v1h-1zM1026 653h1v1h-1zM1040 653h1v1h-1zM1053 653h1v1h-1zM1067 653h1v1h-1zM1080 653h1v1h-1zM1094 653h1v1h-1zM1108 653h1v1h-1zM1121 653h1v1h-1zM1135 653h1v1h-1zM1148 653h1v1h-1zM1162 653h1v1h-1zM1176 653h1v1h-1zM1189 653h1v1h-1zM1203 653h1v1h-1zM1216 653h1v1h-1zM1230 653h1v1h-1zM1243 653h1v1h-1zM7 666h1v1h-1zM21 666h1v1h-1zM34 666h1v1h-1zM48 666h1v1h-1zM62 666h1v1h-1zM75 666h1v1h-1zM89 666h1v1h-1zM102 666h1v1h-1zM116 666h1v1h-1zM129 666h1v1h-1zM143 666h1v1h-1zM157 666h1v1h-1zM170 666h1v1h-1zM184 666h1v1h-1zM197 666h1v1h-1zM211 666h1v1h-1zM225 666h1v1h-1zM238 666h1v1h-1zM252 666h1v1h-1zM265 666h1v1h-1zM279 666h1v1h-1zM292 666h1v1h-1zM306 666h1v1h-1zM320 666h1v1h-1zM333 666h1v1h-1zM347 666h1v1h-1zM360 666h1v1h-1zM374 666h1v1h-1zM388 666h1v1h-1zM401 666h1v1h-1zM415 666h1v1h-1zM428 666h1v1h-1zM442 666h1v1h-1zM456 666h1v1h-1zM469 666h1v1h-1zM483 666h1v1h-1zM496 666h1v1h-1zM510 666h1v1h-1zM523 666h1v1h-1zM537 666h1v1h-1zM551 666h1v1h-1zM564 666h1v1h-1zM578 666h1v1h-1zM591 666h1v1h-1zM605 666h1v1h-1zM619 666h1v1h-1zM632 666h1v1h-1zM646 666h1v1h-1zM659 666h1v1h-1zM673 666h1v1h-1zM686 666h1v1h-1zM700 666h1v1h-1zM714 666h1v1h-1zM727 666h1v1h-1zM741 666h1v1h-1zM754 666h1v1h-1zM768 666h1v1h-1zM782 666h1v1h-1zM795 666h1v1h-1zM809 666h1v1h-1zM822 666h1v1h-1zM836 666h1v1h-1zM849 666h1v1h-1zM863 666h1v1h-1zM877 666h1v1h-1zM890 666h1v1h-1zM904 666h1v1h-1zM917 666h1v1h-1zM931 666h1v1h-1zM945 666h1v1h-1zM958 666h1v1h-1zM972 666h1v1h-1zM985 666h1v1h-1zM999 666h1v1h-1zM1012 666h1v1h-1zM1026 666h1v1h-1zM1040 666h1v1h-1zM1053 666h1v1h-1zM1067 666h1v1h-1zM1080 666h1v1h-1zM1094 666h1v1h-1zM1108 666h1v1h-1zM1121 666h1v1h-1zM1135 666h1v1h-1zM1148 666h1v1h-1zM1162 666h1v1h-1zM1176 666h1v1h-1zM1189 666h1v1h-1zM1203 666h1v1h-1zM1216 666h1v1h-1zM1230 666h1v1h-1zM1243 666h1v1h-1zM7 680h1v1h-1zM21 680h1v1h-1zM34 680h1v1h-1zM48 680h1v1h-1zM62 680h1v1h-1zM75 680h1v1h-1zM89 680h1v1h-1zM102 680h1v1h-1zM116 680h1v1h-1zM129 680h1v1h-1zM143 680h1v1h-1zM157 680h1v1h-1zM170 680h1v1h-1zM184 680h1v1h-1zM197 680h1v1h-1zM211 680h1v1h-1zM225 680h1v1h-1zM238 680h1v1h-1zM252 680h1v1h-1zM265 680h1v1h-1zM279 680h1v1h-1zM292 680h1v1h-1zM306 680h1v1h-1zM320 680h1v1h-1zM333 680h1v1h-1zM347 680h1v1h-1zM360 680h1v1h-1zM374 680h1v1h-1zM388 680h1v1h-1zM401 680h1v1h-1zM415 680h1v1h-1zM428 680h1v1h-1zM442 680h1v1h-1zM456 680h1v1h-1zM469 680h1v1h-1zM483 680h1v1h-1zM496 680h1v1h-1zM510 680h1v1h-1zM523 680h1v1h-1zM537 680h1v1h-1zM551 680h1v1h-1zM564 680h1v1h-1zM578 680h1v1h-1zM591 680h1v1h-1zM605 680h1v1h-1zM619 680h1v1h-1zM632 680h1v1h-1zM646 680h1v1h-1zM659 680h1v1h-1zM673 680h1v1h-1zM686 680h1v1h-1zM700 680h1v1h-1zM714 680h1v1h-1zM727 680h1v1h-1zM741 680h1v1h-1zM754 680h1v1h-1zM768 680h1v1h-1zM782 680h1v1h-1zM795 680h1v1h-1zM809 680h1v1h-1zM822 680h1v1h-1zM836 680h1v1h-1zM849 680h1v1h-1zM863 680h1v1h-1zM877 680h1v1h-1zM890 680h1v1h-1zM904 680h1v1h-1zM917 680h1v1h-1zM931 680h1v1h-1zM945 680h1v1h-1zM958 680h1v1h-1zM972 680h1v1h-1zM985 680h1v1h-1zM999 680h1v1h-1zM1012 680h1v1h-1zM1026 680h1v1h-1zM1040 680h1v1h-1zM1053 680h1v1h-1zM1067 680h1v1h-1zM1080 680h1v1h-1zM1094 680h1v1h-1zM1108 680h1v1h-1zM1121 680h1v1h-1zM1135 680h1v1h-1zM1148 680h1v1h-1zM1162 680h1v1h-1zM1176 680h1v1h-1zM1189 680h1v1h-1zM1203 680h1v1h-1zM1216 680h1v1h-1zM1230 680h1v1h-1zM1243 680h1v1h-1zM7 693h1v1h-1zM21 693h1v1h-1zM34 693h1v1h-1zM48 693h1v1h-1zM62 693h1v1h-1zM75 693h1v1h-1zM89 693h1v1h-1zM102 693h1v1h-1zM116 693h1v1h-1zM129 693h1v1h-1zM143 693h1v1h-1zM157 693h1v1h-1zM170 693h1v1h-1zM184 693h1v1h-1zM197 693h1v1h-1zM211 693h1v1h-1zM225 693h1v1h-1zM238 693h1v1h-1zM252 693h1v1h-1zM265 693h1v1h-1zM279 693h1v1h-1zM292 693h1v1h-1zM306 693h1v1h-1zM320 693h1v1h-1zM333 693h1v1h-1zM347 693h1v1h-1zM360 693h1v1h-1zM374 693h1v1h-1zM388 693h1v1h-1zM401 693h1v1h-1zM415 693h1v1h-1zM428 693h1v1h-1zM442 693h1v1h-1zM456 693h1v1h-1zM469 693h1v1h-1zM483 693h1v1h-1zM496 693h1v1h-1zM510 693h1v1h-1zM523 693h1v1h-1zM537 693h1v1h-1zM551 693h1v1h-1zM564 693h1v1h-1zM578 693h1v1h-1zM591 693h1v1h-1zM605 693h1v1h-1zM619 693h1v1h-1zM632 693h1v1h-1zM646 693h1v1h-1zM659 693h1v1h-1zM673 693h1v1h-1zM686 693h1v1h-1zM700 693h1v1h-1zM714 693h1v1h-1zM727 693h1v1h-1zM741 693h1v1h-1zM754 693h1v1h-1zM768 693h1v1h-1zM782 693h1v1h-1zM795 693h1v1h-1zM809 693h1v1h-1zM822 693h1v1h-1zM836 693h1v1h-1zM849 693h1v1h-1zM863 693h1v1h-1zM877 693h1v1h-1zM890 693h1v1h-1zM904 693h1v1h-1zM917 693h1v1h-1zM931 693h1v1h-1zM945 693h1v1h-1zM958 693h1v1h-1zM972 693h1v1h-1zM985 693h1v1h-1zM999 693h1v1h-1zM1012 693h1v1h-1zM1026 693h1v1h-1zM1040 693h1v1h-1zM1053 693h1v1h-1zM1067 693h1v1h-1zM1080 693h1v1h-1zM1094 693h1v1h-1zM1108 693h1v1h-1zM1121 693h1v1h-1zM1135 693h1v1h-1zM1148 693h1v1h-1zM1162 693h1v1h-1zM1176 693h1v1h-1zM1189 693h1v1h-1zM1203 693h1v1h-1zM1216 693h1v1h-1zM1230 693h1v1h-1zM1243 693h1v1h-1z" fill="#939aab"/></svg>
<svg class="abs" style="left:0;top:0" width="1255" height="706"><path d="M279 618.5H330.8" stroke="#b1b1b7" stroke-width="1" fill="none"/><path d="M332.8 618.5l-5 -3.5v7z" fill="#b1b1b7"/><rect x="293" y="611" width="26" height="15" fill="#fff"/><path d="M519 618.5H580.2" stroke="#b1b1b7" stroke-width="1" fill="none"/><path d="M582.2 618.5l-5 -3.5v7z" fill="#b1b1b7"/><rect x="538" y="611" width="26" height="15" fill="#fff"/><path d="M768 618.5H829.3" stroke="#b1b1b7" stroke-width="1" fill="none"/><path d="M831.3 618.5l-5 -3.5v7z" fill="#b1b1b7"/><rect x="787.5" y="611" width="26.5" height="15" fill="#fff"/><path d="M1017 618.5H1123.8" stroke="#b1b1b7" stroke-width="1" fill="none"/><path d="M1125.8 618.5l-5 -3.5v7z" fill="#b1b1b7"/><rect x="1059" y="611" width="26" height="15" fill="#fff"/></svg>
<div class="t" style="left:295px;top:613px;font-size:11px;color:#111111;-webkit-text-stroke-width:0.3px">术语</div>
<div class="t" style="left:540.5px;top:613px;font-size:11px;color:#111111;-webkit-text-stroke-width:0.3px">查询</div>
<div class="t" style="left:790px;top:613px;font-size:11px;color:#111111;-webkit-text-stroke-width:0.3px">嵌入</div>
<div class="t" style="left:1061px;top:613px;font-size:11px;color:#111111;-webkit-text-stroke-width:0.3px">完成</div>
<div class="abs" style="left:167px;top:601.5px;width:108px;height:34px;border-radius:17px;border:1px solid #e11d48;background:linear-gradient(90deg,#f43f5e,#d946ef)"></div>
<svg class="abs" style="left:196px;top:610.5px;" width="16" height="16" fill="none" stroke-width="2" stroke-linecap="round" stroke-linejoin="round" viewBox="0 0 24 24" stroke="#ffffff"><polygon points="6 3 20 12 6 21 6 3"/></svg>
<div class="t" style="left:219px;top:612px;font-size:13px;color:#ffffff;font-weight:700">开始</div>
<div class="abs" style="left:1129px;top:601.5px;width:108.5px;height:34px;border-radius:17px;border:1px solid #059669;background:linear-gradient(90deg,#10b981,#14b8a6)"></div>
<svg class="abs" style="left:1158.3px;top:610.6px;" width="16" height="16" fill="none" stroke-width="2" stroke-linecap="round" stroke-linejoin="round" viewBox="0 0 24 24" stroke="#ffffff"><circle cx="12" cy="12" r="10"/><path d="m9 12 2 2 4-4"/></svg>
<div class="t" style="left:1181px;top:612px;font-size:13px;color:#ffffff;font-weight:700">结束</div>
<div class="abs" style="left:337px;top:573.5px;width:180px;height:89.5px;border:2px solid #d8defd;border-radius:10px;background:linear-gradient(135deg,#ffffff,#f6f7f9);box-shadow:0 10px 15px -3px rgba(0,0,0,0.1),0 4px 6px -4px rgba(0,0,0,0.1)"></div>
<div class="abs" style="left:346px;top:582px;width:22px;height:22px;border-radius:6px;box-shadow:0 1px 3px rgba(99,102,241,0.3)"></div>
<svg class="abs" style="left:346px;top:582px" width="22" height="22" viewBox="0 0 22 22">
<defs><linearGradient id="rg0" x1="0" y1="0" x2="1" y2="1"><stop offset="0" stop-color="#5b55ef"/><stop offset="1" stop-color="#9234e8"/></linearGradient>
<linearGradient id="hg0" x1="0" y1="0" x2="0" y2="1"><stop offset="0" stop-color="#f0fdfb"/><stop offset="0.4" stop-color="#a6dfe0"/><stop offset="1" stop-color="#3b8a95"/></linearGradient>
<radialGradient id="eg0"><stop offset="0.45" stop-color="#e9feff"/><stop offset="0.6" stop-color="#5fd3e6"/><stop offset="1" stop-color="#2fb4cf"/></radialGradient></defs>
<rect width="22" height="22" rx="6" fill="url(#rg0)"/>
<rect x="2.8" y="8.8" width="2" height="4.2" rx="0.9" fill="#b8332a"/>
<rect x="17.2" y="8.8" width="2" height="4.2" rx="0.9" fill="#b8332a"/>
<rect x="10.6" y="3.8" width="0.8" height="2" fill="#c07a2a"/>
<circle cx="11" cy="3.6" r="1.25" fill="#f7b731"/>
<rect x="4.2" y="5.4" width="13.6" height="12.3" rx="3.2" fill="url(#hg0)"/>
<circle cx="8.2" cy="9.8" r="2.5" fill="url(#eg0)"/><circle cx="13.8" cy="9.8" r="2.5" fill="url(#eg0)"/>
<circle cx="11" cy="11.6" r="0.95" fill="#e0463a"/>
<rect x="7.4" y="13.9" width="7.2" height="1.6" rx="0.5" fill="#4a5a63"/>
<rect x="8.2" y="14.4" width="1.2" height="0.6" fill="#c9d3d6"/><rect x="10.4" y="14.4" width="1.2" height="0.6" fill="#c9d3d6"/><rect x="12.6" y="14.4" width="1.2" height="0.6" fill="#c9d3d6"/>
</svg>
<div class="t" style="left:374.5px;top:584px;font-size:13px;color:#1f2328;-webkit-text-stroke-width:0.5px">术语抽取</div>
<div class="t" style="left:345.6px;top:613px;font-size:11px;color:#4b5260;-webkit-text-stroke-width:0.15px">智能体节点</div>
<div class="abs" style="left:333.3px;top:615.4px;width:6px;height:6px;border-radius:50%;background:#1a192b;border:0.5px solid #fff"></div>
<div class="abs" style="left:514.6px;top:615.4px;width:6px;height:6px;border-radius:50%;background:#1a192b;border:0.5px solid #fff"></div>
<div class="abs" style="left:586px;top:573.5px;width:180px;height:89.5px;border:2px solid #d8defd;border-radius:10px;background:linear-gradient(135deg,#ffffff,#f6f7f9);box-shadow:0 10px 15px -3px rgba(0,0,0,0.1),0 4px 6px -4px rgba(0,0,0,0.1)"></div>
<div class="abs" style="left:595px;top:582px;width:22px;height:22px;border-radius:6px;box-shadow:0 1px 3px rgba(99,102,241,0.3)"></div>
<svg class="abs" style="left:595px;top:582px" width="22" height="22" viewBox="0 0 22 22">
<defs><linearGradient id="rg1" x1="0" y1="0" x2="1" y2="1"><stop offset="0" stop-color="#5b55ef"/><stop offset="1" stop-color="#9234e8"/></linearGradient>
<linearGradient id="hg1" x1="0" y1="0" x2="0" y2="1"><stop offset="0" stop-color="#f0fdfb"/><stop offset="0.4" stop-color="#a6dfe0"/><stop offset="1" stop-color="#3b8a95"/></linearGradient>
<radialGradient id="eg1"><stop offset="0.45" stop-color="#e9feff"/><stop offset="0.6" stop-color="#5fd3e6"/><stop offset="1" stop-color="#2fb4cf"/></radialGradient></defs>
<rect width="22" height="22" rx="6" fill="url(#rg1)"/>
<rect x="2.8" y="8.8" width="2" height="4.2" rx="0.9" fill="#b8332a"/>
<rect x="17.2" y="8.8" width="2" height="4.2" rx="0.9" fill="#b8332a"/>
<rect x="10.6" y="3.8" width="0.8" height="2" fill="#c07a2a"/>
<circle cx="11" cy="3.6" r="1.25" fill="#f7b731"/>
<rect x="4.2" y="5.4" width="13.6" height="12.3" rx="3.2" fill="url(#hg1)"/>
<circle cx="8.2" cy="9.8" r="2.5" fill="url(#eg1)"/><circle cx="13.8" cy="9.8" r="2.5" fill="url(#eg1)"/>
<circle cx="11" cy="11.6" r="0.95" fill="#e0463a"/>
<rect x="7.4" y="13.9" width="7.2" height="1.6" rx="0.5" fill="#4a5a63"/>
<rect x="8.2" y="14.4" width="1.2" height="0.6" fill="#c9d3d6"/><rect x="10.4" y="14.4" width="1.2" height="0.6" fill="#c9d3d6"/><rect x="12.6" y="14.4" width="1.2" height="0.6" fill="#c9d3d6"/>
</svg>
<div class="t" style="left:623.5px;top:584px;font-size:13px;color:#1f2328;-webkit-text-stroke-width:0.5px">词典查询</div>
<div class="t" style="left:594.6px;top:613px;font-size:11px;color:#4b5260;-webkit-text-stroke-width:0.15px">智能体节点</div>
<div class="abs" style="left:582.3px;top:615.4px;width:6px;height:6px;border-radius:50%;background:#1a192b;border:0.5px solid #fff"></div>
<div class="abs" style="left:763.6px;top:615.4px;width:6px;height:6px;border-radius:50%;background:#1a192b;border:0.5px solid #fff"></div>
<div class="abs" style="left:835px;top:573.5px;width:180px;height:89.5px;border:2px solid #d8defd;border-radius:10px;background:linear-gradient(135deg,#ffffff,#f6f7f9);box-shadow:0 10px 15px -3px rgba(0,0,0,0.1),0 4px 6px -4px rgba(0,0,0,0.1)"></div>
<div class="abs" style="left:844px;top:582px;width:22px;height:22px;border-radius:6px;box-shadow:0 1px 3px rgba(99,102,241,0.3)"></div>
<svg class="abs" style="left:844px;top:582px" width="22" height="22" viewBox="0 0 22 22">
<defs><linearGradient id="rg2" x1="0" y1="0" x2="1" y2="1"><stop offset="0" stop-color="#5b55ef"/><stop offset="1" stop-color="#9234e8"/></linearGradient>
<linearGradient id="hg2" x1="0" y1="0" x2="0" y2="1"><stop offset="0" stop-color="#f0fdfb"/><stop offset="0.4" stop-color="#a6dfe0"/><stop offset="1" stop-color="#3b8a95"/></linearGradient>
<radialGradient id="eg2"><stop offset="0.45" stop-color="#e9feff"/><stop offset="0.6" stop-color="#5fd3e6"/><stop offset="1" stop-color="#2fb4cf"/></radialGradient></defs>
<rect width="22" height="22" rx="6" fill="url(#rg2)"/>
<rect x="2.8" y="8.8" width="2" height="4.2" rx="0.9" fill="#b8332a"/>
<rect x="17.2" y="8.8" width="2" height="4.2" rx="0.9" fill="#b8332a"/>
<rect x="10.6" y="3.8" width="0.8" height="2" fill="#c07a2a"/>
<circle cx="11" cy="3.6" r="1.25" fill="#f7b731"/>
<rect x="4.2" y="5.4" width="13.6" height="12.3" rx="3.2" fill="url(#hg2)"/>
<circle cx="8.2" cy="9.8" r="2.5" fill="url(#eg2)"/><circle cx="13.8" cy="9.8" r="2.5" fill="url(#eg2)"/>
<circle cx="11" cy="11.6" r="0.95" fill="#e0463a"/>
<rect x="7.4" y="13.9" width="7.2" height="1.6" rx="0.5" fill="#4a5a63"/>
<rect x="8.2" y="14.4" width="1.2" height="0.6" fill="#c9d3d6"/><rect x="10.4" y="14.4" width="1.2" height="0.6" fill="#c9d3d6"/><rect x="12.6" y="14.4" width="1.2" height="0.6" fill="#c9d3d6"/>
</svg>
<div class="t" style="left:872.5px;top:584px;font-size:13px;color:#1f2328;-webkit-text-stroke-width:0.5px">术语嵌入翻译</div>
<div class="t" style="left:843.6px;top:613px;font-size:11px;color:#4b5260;-webkit-text-stroke-width:0.15px">智能体节点</div>
<div class="abs" style="left:831.3px;top:615.4px;width:6px;height:6px;border-radius:50%;background:#1a192b;border:0.5px solid #fff"></div>
<div class="abs" style="left:1012.6px;top:615.4px;width:6px;height:6px;border-radius:50%;background:#1a192b;border:0.5px solid #fff"></div>
</body></html>
